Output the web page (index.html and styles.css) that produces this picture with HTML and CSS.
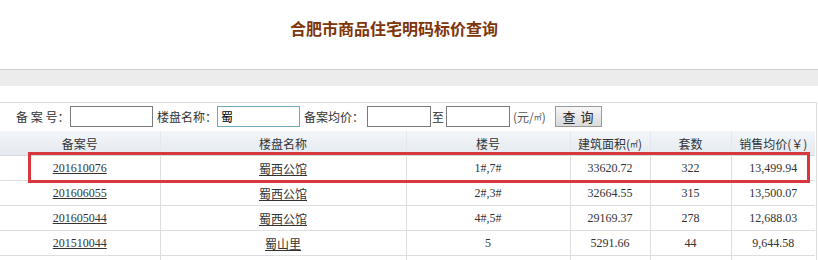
FILE: index.html
```html
<!DOCTYPE html>
<html lang="zh-CN">
<head>
<meta charset="utf-8">
<title>合肥市商品住宅明码标价查询</title>
<link rel="stylesheet" href="styles.css">
</head>
<body>
<div class="page">
  <header class="title-bar">
    <h1 class="title">合肥市商品住宅明码标价查询</h1>
  </header>
  <div class="band"></div>
  <div class="content">
    <form class="search">
      <span class="lbl lbl-first">备&nbsp;案&nbsp;号：</span>
      <span class="inp inp-wide"></span>
      <span class="lbl lbl-name">楼盘名称：</span>
      <span class="inp inp-wide inp-focus">蜀</span>
      <span class="lbl lbl-price">备案均价：</span>
      <span class="inp inp-narrow"></span>
      <span class="lbl lbl-to">至</span>
      <span class="inp inp-narrow"></span>
      <span class="lbl lbl-unit">(元/<small class="sq">㎡</small>)</span>
      <span class="btn">查 询</span>
    </form>
    <div class="table-wrap">
      <table class="grid">
        <colgroup>
          <col class="c1"><col class="c2"><col class="c3"><col class="c4"><col class="c5"><col class="c6">
        </colgroup>
        <thead>
          <tr><th>备案号</th><th>楼盘名称</th><th>楼号</th><th>建筑面积(<small class="sq">㎡</small>)</th><th>套数</th><th>销售均价(￥)</th></tr>
        </thead>
        <tbody>
          <tr><td><a href="#">201610076</a></td><td class="cjk"><a href="#">蜀西公馆</a></td><td>1#,7#</td><td>33620.72</td><td>322</td><td>13,499.94</td></tr>
          <tr><td><a href="#">201606055</a></td><td class="cjk"><a href="#">蜀西公馆</a></td><td>2#,3#</td><td>32664.55</td><td>315</td><td>13,500.07</td></tr>
          <tr><td><a href="#">201605044</a></td><td class="cjk"><a href="#">蜀西公馆</a></td><td>4#,5#</td><td>29169.37</td><td>278</td><td>12,688.03</td></tr>
          <tr><td><a href="#">201510044</a></td><td class="cjk"><a href="#">蜀山里</a></td><td>5</td><td>5291.66</td><td>44</td><td>9,644.58</td></tr>
          <tr><td></td><td></td><td></td><td></td><td></td><td></td></tr>
        </tbody>
      </table>
      <div class="highlight"></div>
    </div>
  </div>
</div>
</body>
</html>
```
FILE: styles.css
```css
html, body {
  margin: 0;
  padding: 0;
  background: #ffffff;
}
body {
  font-family: "Liberation Serif", "Noto Sans CJK SC", serif;
  font-size: 12px;
  color: #333333;
  overflow: hidden;
}
.page {
  width: 818px;
}
.title-bar {
  height: 69px;
  display: flex;
  justify-content: center;
  padding-right: 30px;
  box-sizing: border-box;
}
.title {
  margin: 18px 0 0 0;
  font-family: "Noto Sans CJK SC", sans-serif;
  font-size: 16px;
  line-height: 20px;
  font-weight: bold;
  color: #7d3509;
}
.band {
  height: 16px;
  border-top: 1px solid #cfcfcf;
  background: #ececec;
}
.content {
  margin-top: 16px;
  width: 816px;
  border-top: 1px solid #dcdcdc;
  border-right: 1px solid #dcdcdc;
}
.search {
  height: 27px;
  margin: 0;
  display: flex;
  align-items: center;
  font-family: "Noto Sans CJK SC", sans-serif;
  font-size: 12px;
  color: #333;
}
.lbl {
  white-space: nowrap;
  line-height: 21px;
}
.lbl-first { margin-left: 16px; width: 54px; }
.lbl-name { margin-left: 4px; width: 60px; }
.lbl-price { margin-left: 4px; width: 63px; }
.lbl-to { margin-left: 1px; width: 14px; }
.lbl-unit { margin-left: 3px; width: 42px; color: #555; }
.sq { font-size: 8px; vertical-align: 2px; }
.inp {
  box-sizing: border-box;
  height: 21px;
  border: 1px solid #7a7a7a;
  background: #fff;
  line-height: 19px;
  padding-left: 3px;
  font-size: 12px;
  color: #000;
}
.inp-wide { width: 83px; }
.inp-narrow { width: 64px; }
.inp-focus { border-color: #6fa7b9; }
.btn {
  box-sizing: border-box;
  width: 47px;
  height: 21px;
  border: 1px solid #9a9a9a;
  background: linear-gradient(#f7f7f7, #d9d9d9);
  text-align: center;
  line-height: 19px;
  font-size: 13px;
  letter-spacing: 1px;
  color: #222;
}
.table-wrap {
  position: relative;
  margin-top: 1px;
}
.grid {
  width: 815px;
  border-collapse: collapse;
  table-layout: fixed;
}
.c1 { width: 160px; }
.c2 { width: 246px; }
.c3 { width: 164px; }
.c4 { width: 80px; }
.c5 { width: 81px; }
.c6 { width: 84px; }
.grid th {
  height: 24px;
  padding: 0;
  font-family: "Noto Sans CJK SC", sans-serif;
  font-weight: normal;
  font-size: 12px;
  color: #333;
  background: linear-gradient(#f3f6f9, #e4eaf0);
  border-left: 1px solid #e4e8ec;
  border-bottom: 1px solid #d6dbe0;
  text-align: center;
}
.grid th:first-child { border-left: none; }
.grid td {
  height: 24px;
  padding: 0;
  text-align: center;
  border-left: 1px solid #dedede;
  border-bottom: 1px solid #dedede;
  color: #333;
  font-size: 12px;
}
.grid td:first-child { border-left: none; }
.grid td.cjk { font-family: "Noto Sans CJK SC", sans-serif; }
.grid a {
  color: #333;
  text-decoration: underline;
}
.highlight {
  position: absolute;
  left: 28px;
  top: 21px;
  width: 782px;
  height: 31px;
  box-sizing: border-box;
  border: 3px solid #d7383d;
  pointer-events: none;
}
```
